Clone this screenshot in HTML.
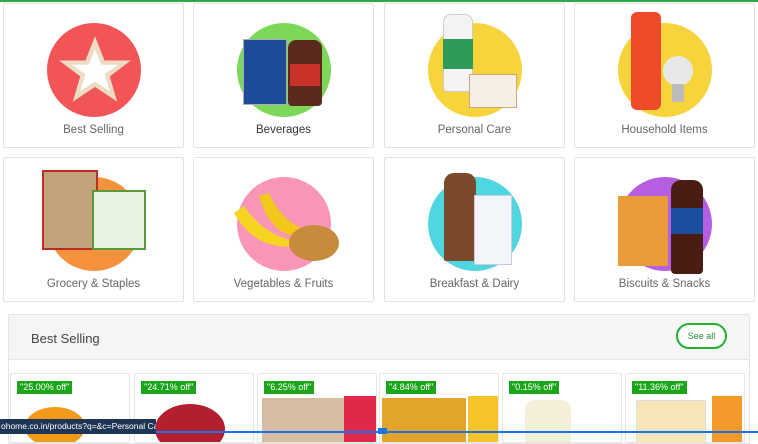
<!DOCTYPE html>
<html><head><style>
*{margin:0;padding:0;box-sizing:border-box}
body{width:758px;height:434px;overflow:hidden;background:#fff;font-family:"Liberation Sans",sans-serif;position:relative}
.top{position:absolute;left:0;top:0;width:758px;height:2px;background:#2ca84a}
.card{position:absolute;width:181px;height:145px;border:1px solid #e2e2e2;border-radius:2px;background:#fff}
.circ{position:absolute;left:43px;top:19px;width:94px;height:94px;border-radius:50%}
.lbl{position:absolute;left:0;right:0;top:120px;text-align:center;font-size:11.5px;color:#666}
.it{position:absolute}
.panel{position:absolute;left:8px;top:314px;width:742px;height:130px;border:1px solid #e4e4e4;background:#fff}
.ph{height:45px;background:#f5f5f5;border-bottom:1px solid #e6e6e6;position:relative}
.ph span{position:absolute;left:22px;top:16px;font-size:13px;color:#444}
.see{position:absolute;left:667px;top:8px;width:51px;height:26px;border:2px solid #22b02e;border-radius:13px;font-size:9px;color:#2b8a3e;text-align:center;line-height:22px;background:#fff}
.pc{position:absolute;top:373px;width:120px;height:70px;border:1px solid #e6e6e6;border-radius:2px;background:#fff;overflow:hidden}
.tag{position:absolute;left:6px;top:7px;background:#1aa51a;color:#fff;font-size:9px;padding:1px 3px;line-height:11px}
</style></head><body>
<div class="top"></div>

<div class="card" style="left:3px;top:3px"><div class="circ" style="background:#f25556"></div>
<svg class="it" style="left:52px;top:28px" width="78" height="76" viewBox="0 0 72 72"><polygon points="36,4 45,27 70,27 50,42 57,66 36,52 15,66 22,42 2,27 27,27" fill="#ecdcc4"/><polygon points="36,16 42,31 58,31 45,40 50,56 36,47 22,56 27,40 14,31 30,31" fill="#fff"/></svg>
<div class="lbl">Best Selling</div></div>

<div class="card" style="left:193px;top:3px"><div class="circ" style="background:#7dd85a"></div>
<div class="it" style="left:49px;top:35px;width:44px;height:66px;background:#1f4c9a;border:1px solid #aab"></div>
<div class="it" style="left:94px;top:36px;width:34px;height:66px;background:#5a2a1e;border-radius:8px 8px 4px 4px"></div>
<div class="it" style="left:96px;top:60px;width:30px;height:22px;background:#c8322a"></div>
<div class="lbl" style="color:#333">Beverages</div></div>

<div class="card" style="left:384px;top:3px"><div class="circ" style="background:#f7d33c"></div>
<div class="it" style="left:58px;top:10px;width:30px;height:78px;background:#f3f3f3;border-radius:8px 8px 4px 4px;border:1px solid #ccc"></div>
<div class="it" style="left:58px;top:35px;width:30px;height:30px;background:#2f9a5a"></div>
<div class="it" style="left:84px;top:70px;width:48px;height:34px;background:#f5efe6;border:1px solid #c9a77a"></div>
<div class="lbl">Personal Care</div></div>

<div class="card" style="left:574px;top:3px"><div class="circ" style="background:#f7d33c"></div>
<div class="it" style="left:56px;top:8px;width:30px;height:98px;background:#f04a2a;border-radius:6px"></div>
<div class="it" style="left:88px;top:52px;width:30px;height:30px;background:#e8e8e8;border-radius:50%"></div>
<div class="it" style="left:97px;top:80px;width:12px;height:18px;background:#bbb"></div>
<div class="lbl">Household Items</div></div>

<div class="card" style="left:3px;top:157px"><div class="circ" style="background:#f6923e"></div>
<div class="it" style="left:38px;top:12px;width:56px;height:80px;background:#c3a27a;border:2px solid #b63028"></div>
<div class="it" style="left:88px;top:32px;width:54px;height:60px;background:#e9f3e2;border:2px solid #5a9a3a"></div>
<div class="lbl">Grocery &amp; Staples</div></div>

<div class="card" style="left:193px;top:157px"><div class="circ" style="background:#f896b8"></div>
<svg class="it" style="left:35px;top:30px" width="110" height="80"><path d="M5,25 Q30,70 85,55 Q40,55 15,18Z" fill="#f5d422"/><path d="M30,8 Q45,60 90,45 Q55,40 40,5Z" fill="#f2c81a"/><ellipse cx="85" cy="55" rx="25" ry="18" fill="#c88a3c"/></svg>
<div class="lbl">Vegetables &amp; Fruits</div></div>

<div class="card" style="left:384px;top:157px"><div class="circ" style="background:#4fd6e0"></div>
<div class="it" style="left:59px;top:15px;width:32px;height:88px;background:#7a4a2a;border-radius:10px 10px 2px 2px"></div>
<div class="it" style="left:89px;top:37px;width:38px;height:70px;background:#f2f6fa;border:1px solid #ccd"></div>
<div class="lbl">Breakfast &amp; Dairy</div></div>

<div class="card" style="left:574px;top:157px"><div class="circ" style="background:#b65ee0"></div>
<div class="it" style="left:43px;top:38px;width:50px;height:70px;background:#e99a3a"></div>
<div class="it" style="left:96px;top:22px;width:32px;height:94px;background:#4a1c14;border-radius:10px 10px 4px 4px"></div>
<div class="it" style="left:96px;top:50px;width:32px;height:26px;background:#1d4f9e"></div>
<div class="lbl">Biscuits &amp; Snacks</div></div>

<div class="panel"><div class="ph"><span>Best Selling</span><div class="see">See all</div></div></div>

<div class="pc" style="left:10px"><div class="tag">"25.00% off"</div><div class="it" style="left:14px;top:33px;width:60px;height:40px;background:#f39a1a;border-radius:50%"></div></div>
<div class="pc" style="left:134px"><div class="tag">"24.71% off"</div><div class="it" style="left:20px;top:30px;width:70px;height:50px;background:#b31f2f;border-radius:50%"></div></div>
<div class="pc" style="left:257px"><div class="tag">"6.25% off"</div><div class="it" style="left:4px;top:24px;width:82px;height:50px;background:#d6bca0"></div><div class="it" style="left:86px;top:22px;width:34px;height:50px;background:#e0284a"></div></div>
<div class="pc" style="left:379px"><div class="tag">"4.84% off"</div><div class="it" style="left:2px;top:24px;width:84px;height:50px;background:#e3a42a"></div><div class="it" style="left:88px;top:22px;width:32px;height:50px;background:#f7c22a"></div></div>
<div class="pc" style="left:502px"><div class="tag">"0.15% off"</div><div class="it" style="left:22px;top:26px;width:46px;height:50px;background:#f3efd8;border-radius:10px 10px 0 0"></div></div>
<div class="pc" style="left:625px"><div class="tag">"11.36% off"</div><div class="it" style="left:10px;top:26px;width:70px;height:50px;background:#f6e6b8;border:1px solid #ddd"></div><div class="it" style="left:86px;top:22px;width:30px;height:50px;background:#f59a2a"></div></div>

<div class="it" style="left:0;top:419px;width:156px;height:15px;background:#1e3556;color:#fff;font-size:8.5px;line-height:14px;padding-left:1px;white-space:nowrap;overflow:hidden">ohome.co.in/products?q=&amp;c=Personal Care</div>
<div class="it" style="left:156px;top:431px;width:602px;height:2px;background:#1a73e8"></div>
<div class="it" style="left:378px;top:428px;width:9px;height:6px;background:#1a73e8"></div>
</body></html>
